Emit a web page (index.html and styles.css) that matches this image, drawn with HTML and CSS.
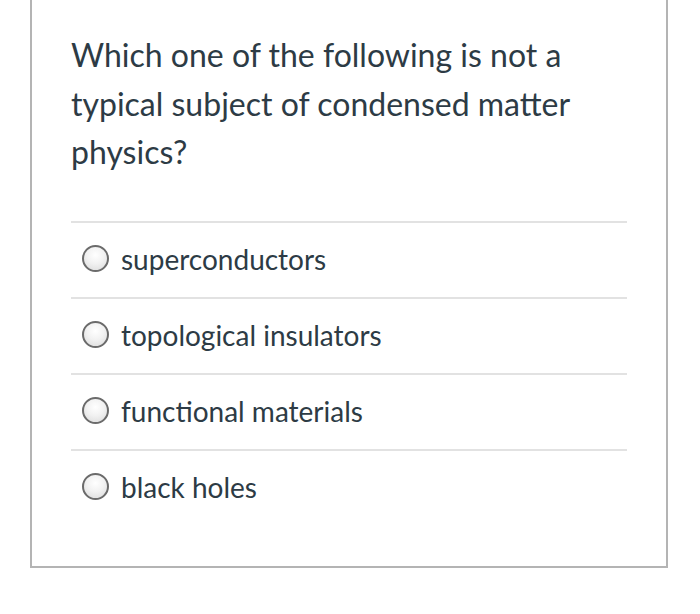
FILE: index.html
```html
<!DOCTYPE html>
<html>
<head>
<meta charset="utf-8">
<link rel="stylesheet" href="styles.css">
</head>
<body>
<div class="card">
  <p class="question">Which one of the following is not a typical subject of condensed matter physics?</p>
  <div class="answers">
    <label class="answer"><span class="radio"></span><span class="label-text">superconductors</span></label>
    <label class="answer"><span class="radio"></span><span class="label-text">topological insulators</span></label>
    <label class="answer"><span class="radio"></span><span class="label-text">functional materials</span></label>
    <label class="answer"><span class="radio"></span><span class="label-text">black holes</span></label>
  </div>
</div>
</body>
</html>
```
FILE: styles.css
```css
html, body {
  margin: 0;
  padding: 0;
  background: #ffffff;
}
body {
  font-family: Lato, "Liberation Sans", sans-serif;
  color: #2d3b45;
}
.card {
  box-sizing: border-box;
  width: 638px;
  margin-left: 30px;
  border: 2px solid #b4b4b4;
  border-top: 0;
  padding: 31px 39px 41px 39px;
}
.question {
  margin: 0 0 44px 0;
  font-size: 32px;
  line-height: 48.5px;
}
.answers {
  display: flex;
  flex-direction: column;
}
.answer {
  box-sizing: border-box;
  display: flex;
  align-items: center;
  gap: 12px;
  height: 76px;
  border-top: 2px solid #e2e2e2;
  padding: 0 0 2px 11px;
}
.radio {
  box-sizing: border-box;
  width: 27px;
  height: 27px;
  border-radius: 50%;
  border: 2px solid #6b6b6b;
  background: radial-gradient(circle at 50% 35%, #ffffff 0%, #f2f2f2 45%, #d9d9d9 100%);
  flex: none;
}
.label-text {
  font-size: 28px;
  line-height: 32px;
}
```
